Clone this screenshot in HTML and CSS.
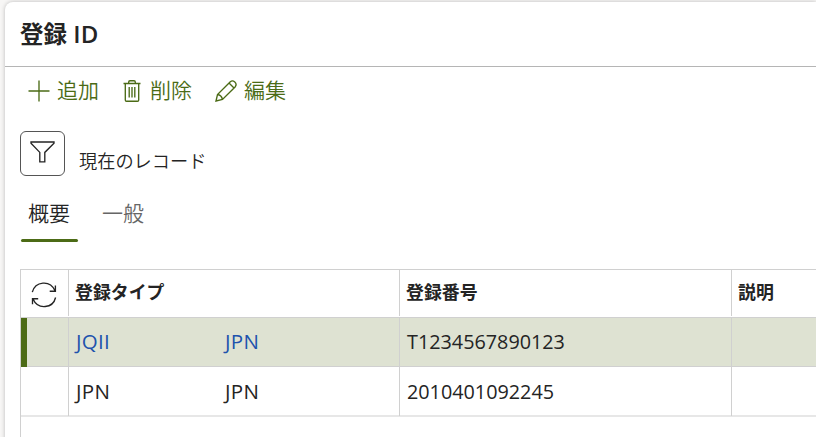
FILE: index.html
```html
<!DOCTYPE html>
<html lang="ja">
<head>
<meta charset="utf-8">
<title>登録 ID</title>
<link rel="stylesheet" href="styles.css">
</head>
<body>
<main class="panel">
  <header class="panel-header"><h1>登録 <span class="latin">ID</span></h1></header>
  <div class="toolbar">
    <button class="action add"><svg width="22" height="22" viewBox="0 0 22 22"><path d="M11 0.5V21.5M.5 11H21.5"/></svg><span>追加</span></button>
    <button class="action delete"><svg width="18" height="22" viewBox="0 0 18 22"><path d="M.5 3.5H17.5M5.7 3.5V2Q5.7.7 7 .7H11Q12.3.7 12.3 2V3.5M2.3 3.5V20Q2.3 21.2 3.5 21.2H14.5Q15.7 21.2 15.7 20V3.5M6.2 7V17.5M9 7V17.5M11.8 7V17.5"/></svg><span>削除</span></button>
    <button class="action edit"><svg width="22" height="22" viewBox="0 0 22 22"><path d="M1 21L2.5 14.5L15.3 1.7Q17.5-.1 19.8 2T20.3 6.7L7.5 19.5ZM14 3L19 8M2.5 14.5Q6.5 15 7.5 19.5"/></svg><span>編集</span></button>
  </div>
  <div class="filter-row">
    <button class="filter" aria-label="フィルター"><svg width="25" height="22" viewBox="0 0 25 22"><path d="M1 1H24V2.3L14.8 11.4V20.8H9.8V11.4L1 2.3Z"/></svg></button>
    <span class="record-label">現在のレコード</span>
  </div>
  <nav class="tabs"><a class="tab active">概要</a><a class="tab">一般</a></nav>
  <section class="grid">
    <div class="row head">
      <div class="cell marker"><svg width="26" height="26" viewBox="0 0 26 26"><path d="M1.3 10.2C4.2-.8 19-2.5 24 8.7M24.4 3.5V9.2H18.7M24.6 15.5C22 26.4 7 28.2 2 17M1.5 22.3V16.7H7.2"/></svg></div>
      <div class="cell">登録タイプ</div><div class="cell">登録番号</div><div class="cell">説明</div>
    </div>
    <div class="row selected">
      <div class="cell marker"></div>
      <div class="cell type"><span>JQII</span><span>JPN</span></div><div class="cell number">T1234567890123</div><div class="cell"></div>
    </div>
    <div class="row">
      <div class="cell marker"></div>
      <div class="cell type"><span>JPN</span><span>JPN</span></div><div class="cell number">2010401092245</div><div class="cell"></div>
    </div>
  </section>
</main>
</body>
</html>
```
FILE: styles.css
```css
* { box-sizing: border-box; }
body {
  margin: 0;
  padding: 2px 0 0 5px;
  height: 437px;
  overflow: hidden;
  background: #f7f6f5;
  color: #242424;
  font-family: "Noto Sans CJK JP", sans-serif;
  font-weight: 350;
}
svg { display: block; fill: none; stroke: currentColor; stroke-width: 1.35; }
button { border: 0; padding: 0; background: none; font: inherit; color: inherit; }
.panel {
  height: 445px;
  background: #fff;
  border-top-left-radius: 8px;
  box-shadow: 0 0 4px rgba(0, 0, 0, .24);
}
.panel-header { height: 65px; padding: 13px 0 0 15px; border-bottom: 1px solid #b5b5b5; }
h1 { margin: 0; font-size: 23.5px; line-height: 36px; font-weight: 700; }
.latin { font-family: "Open Sans", sans-serif; font-weight: 600; font-size: 24px; margin-left: 1px; letter-spacing: 0; }
.toolbar { display: flex; height: 48px; padding-left: 23px; align-items: center; color: #4b6b16; font-size: 21px; }
.action { display: flex; align-items: center; height: 30px; line-height: 30px; }
.action span { margin-top: -5px; }
.add svg { margin-right: 7px; }
.delete { margin-left: 24px; }
.delete svg { margin-right: 9px; }
.edit { margin-left: 23px; }
.edit svg { margin-right: 7px; }
.filter-row { display: flex; margin-top: 16px; padding-left: 15px; height: 45px; }
.filter { width: 45px; height: 45px; border: 1px solid #555; border-radius: 6px; padding: 0 0 3px 9px; }
.record-label { margin: 16px 0 0 14px; font-size: 18.2px; line-height: 27px; }
.tabs { display: flex; gap: 17px; margin-top: 18px; padding-left: 16px; height: 48px; }
.tab { width: 57px; padding-left: 7px; font-size: 21px; line-height: 37px; color: #666; border-bottom: 3px solid transparent; white-space: nowrap; }
.tab.active { position: relative; color: #242424; }
.tab.active::after { content: ""; position: absolute; left: 0; bottom: -3px; width: 57px; height: 3px; border-radius: 2px; background: #4c6b16; }
.grid { margin: 27px 0 0 15px; height: 180px; border: solid #d0d0d0; border-width: 1px 0 0 1px; }
.row { display: grid; grid-template-columns: 48px 331px 332px 1fr; height: 49px; border-bottom: 1px solid #d0d0d0; }
.row.head { height: 48px; }
.row:last-child { height: 50px; border-bottom: 2px solid #e7e7e7; }
.cell { padding-left: 7px; border-right: 1px solid #d0d0d0; font-family: "Open Sans", "Noto Sans CJK JP", sans-serif; font-size: 19.8px; font-weight: 400; line-height: 48px; white-space: nowrap; }
.cell:last-child { border-right: 0; }
.head .cell { padding-left: 6px; font-family: "Noto Sans CJK JP", sans-serif; font-size: 17.9px; line-height: 43px; font-weight: 700; margin-bottom: 1px; }
.head .marker { padding: 12px 0 0 10px; }
.selected { background: #dee2d2; }
.selected .marker { border-left: 6px solid #4c6b16; margin-bottom: -1px; }
.selected .type { color: #2052ad; }
.type { display: grid; grid-template-columns: 149px 1fr; font-size: 20.5px; letter-spacing: .3px; line-height: 47px; }
.row:last-child .cell { line-height: 49px; }
```
